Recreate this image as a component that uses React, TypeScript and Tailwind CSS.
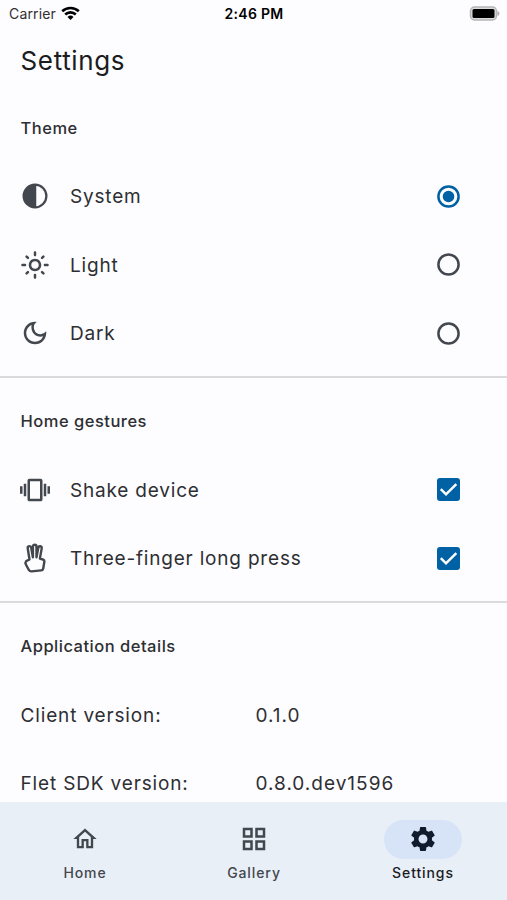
import type { ReactNode } from "react";
import { MdOutlineLightMode, MdOutlineDarkMode, MdVibration, MdOutlineHome, MdGridView, MdSettings } from "react-icons/md";

function ContrastIcon() {
  return (
    <svg width="30" height="30" viewBox="0 0 24 24" fill="none">
      <circle cx="12" cy="12" r="9.1" stroke="currentColor" strokeWidth="1.8" />
      <path d="M13 3v18h-1a9 9 0 0 1 0-18z" fill="currentColor" />
    </svg>
  );
}

function HandIcon() {
  return (
    <svg className="overflow-visible" width="29" height="29" viewBox="0 0 29 29" fill="none" stroke="currentColor" strokeWidth="2.4" strokeLinejoin="round" strokeLinecap="round">
      <path d="M8.500 15.500 6.700 4.300c-.3-2.500 3-3 3.500-.6l1.700 9.600V2.500c0-2.300 3.600-2.300 3.600 0v10.800l1.800-9.600c.5-2.300 3.800-1.700 3.400.7L18.900 14.600l3 .9c1 .3 1.600 1 1.500 2l-1.200 7c-.2 1.200-.9 1.800-2 1.900l-9.700 1c-1.200.1-1.900-.3-2.500-1.200l-3-5.500c-.7-1.300-.7-2.500.2-3.600z" />
    </svg>
  );
}

function Row({ icon, label, children }: { icon: ReactNode; label: string; children: ReactNode }) {
  return (
    <div className="flex h-[68.5px] items-center pl-5 pr-[47px]">
      <span className="flex w-[30px] shrink-0 justify-center text-[#43474e]">{icon}</span>
      <span className="ml-5 flex-1 pt-[2.5px] text-[19px] tracking-[0.8px] whitespace-nowrap">{label}</span>
      {children}
    </div>
  );
}

function Radio({ checked = false }: { checked?: boolean }) {
  return (
    <svg width="23" height="23" viewBox="0 0 23 23" fill="none" className={checked ? "text-[#0061a4]" : "text-[#43474e]"}>
      <circle cx="11.5" cy="11.5" r="10.1" stroke="currentColor" strokeWidth="2.5" />
      {checked && <circle cx="11.5" cy="11.5" r="5.8" fill="currentColor" />}
    </svg>
  );
}

function Checkbox() {
  return (
    <span className="flex size-[23px] items-center justify-center rounded-[3px] bg-[#0061a4]">
      <svg width="23" height="23" viewBox="0 0 23 23" fill="none" stroke="white" strokeWidth="2.500">
        <path d="M3.800 11.200 9 16.300 19.300 6.100" />
      </svg>
    </span>
  );
}

function Header({ children }: { children: ReactNode }) {
  return <h2 className="flex h-[68.5px] items-center pt-px pl-[20.5px] text-[16.5px] font-medium tracking-[0.5px] whitespace-nowrap">{children}</h2>;
}

function Divider() {
  return (
    <div className="flex h-[19.5px] items-center">
      <div className="h-[2px] w-full bg-[#dadbdf]" />
    </div>
  );
}

function Detail({ label, value }: { label: string; value: string }) {
  return (
    <div className="flex h-[68.5px] items-center pl-[20.5px] pt-[2px] text-[19px] tracking-[0.85px] whitespace-nowrap">
      <span className="w-[235px]">{label}</span>
      <span className="tracking-[1px]">{value}</span>
    </div>
  );
}

function NavItem({ icon, label, active = false }: { icon: ReactNode; label: string; active?: boolean }) {
  return (
    <div className={`flex flex-1 flex-col items-center pt-[18px] ${active ? "text-[#1a1c1e]" : "text-[#43474e]"}`}>
      <span className={`flex h-[39px] w-[78px] items-center justify-center rounded-full pb-px ${active ? "bg-[#d7e3f7] text-[#101c2b]" : ""}`}>{icon}</span>
      <span className="mt-1 pl-px text-[14px] leading-5 font-medium tracking-[0.9px]">{label}</span>
    </div>
  );
}

export default function App() {
  return (
    <div className="flex h-[900px] w-[507px] flex-col overflow-hidden bg-[#fdfcff] font-['Inter',sans-serif] text-[#2d2f32]">
      <div className="grid h-[27px] shrink-0 grid-cols-3 items-center pl-[9px] pr-[7px] text-[14px] text-black">
        <span className="flex items-center gap-[5px] tracking-[0.15px] text-[#303030]">
          Carrier
          <svg width="19" height="15" viewBox="0 0 19 15" fill="none" stroke="black" strokeWidth="2.600">
            <path d="M1.200 5.300a12 12 0 0 1 16.600 0M4.200 8.500a7.600 7.600 0 0 1 10.600 0" />
            <path d="m9.500 14 3-3a4.300 4.300 0 0 0-6 0z" fill="black" stroke="none" />
          </svg>
        </span>
        <span className="-ml-px text-center font-semibold tracking-[0.3px]">2:46 PM</span>
        <svg className="justify-self-end" width="31" height="15" viewBox="0 0 31 15">
          <rect x="1.500" y="1" width="26" height="13" rx="4" fill="#ddd" stroke="#b5b5b5" strokeWidth="1.500" />
          <rect x="3.500" y="3" width="22" height="9" rx="1.500" fill="black" />
          <path d="M28.500 5c2.600.8 2.600 4.200 0 5z" fill="#aaa" />
        </svg>
      </div>
      <h1 className="flex h-[66.5px] shrink-0 items-center pl-[20.5px] text-[26px] tracking-[0.65px] text-[#1a1c1e]">Settings</h1>
      <main className="min-h-0 flex-1 overflow-hidden">
        <Header>Theme</Header>
        <Row icon={<ContrastIcon />} label="System"><Radio checked /></Row>
        <Row icon={<MdOutlineLightMode size={30} />} label="Light"><Radio /></Row>
        <Row icon={<MdOutlineDarkMode size={30} />} label="Dark"><Radio /></Row>
        <Divider />
        <Header>Home gestures</Header>
        <Row icon={<MdVibration size={30} />} label="Shake device"><Checkbox /></Row>
        <Row icon={<HandIcon />} label="Three-finger long press"><Checkbox /></Row>
        <Divider />
        <Header>Application details</Header>
        <Detail label="Client version:" value="0.1.0" />
        <Detail label="Flet SDK version:" value="0.8.0.dev1596" />
      </main>
      <nav className="flex h-[98px] shrink-0 bg-[#e9eff7]">
        <NavItem icon={<MdOutlineHome size={28} />} label="Home" />
        <NavItem icon={<MdGridView size={30} />} label="Gallery" />
        <NavItem icon={<MdSettings size={30} />} label="Settings" active />
      </nav>
    </div>
  );
}
